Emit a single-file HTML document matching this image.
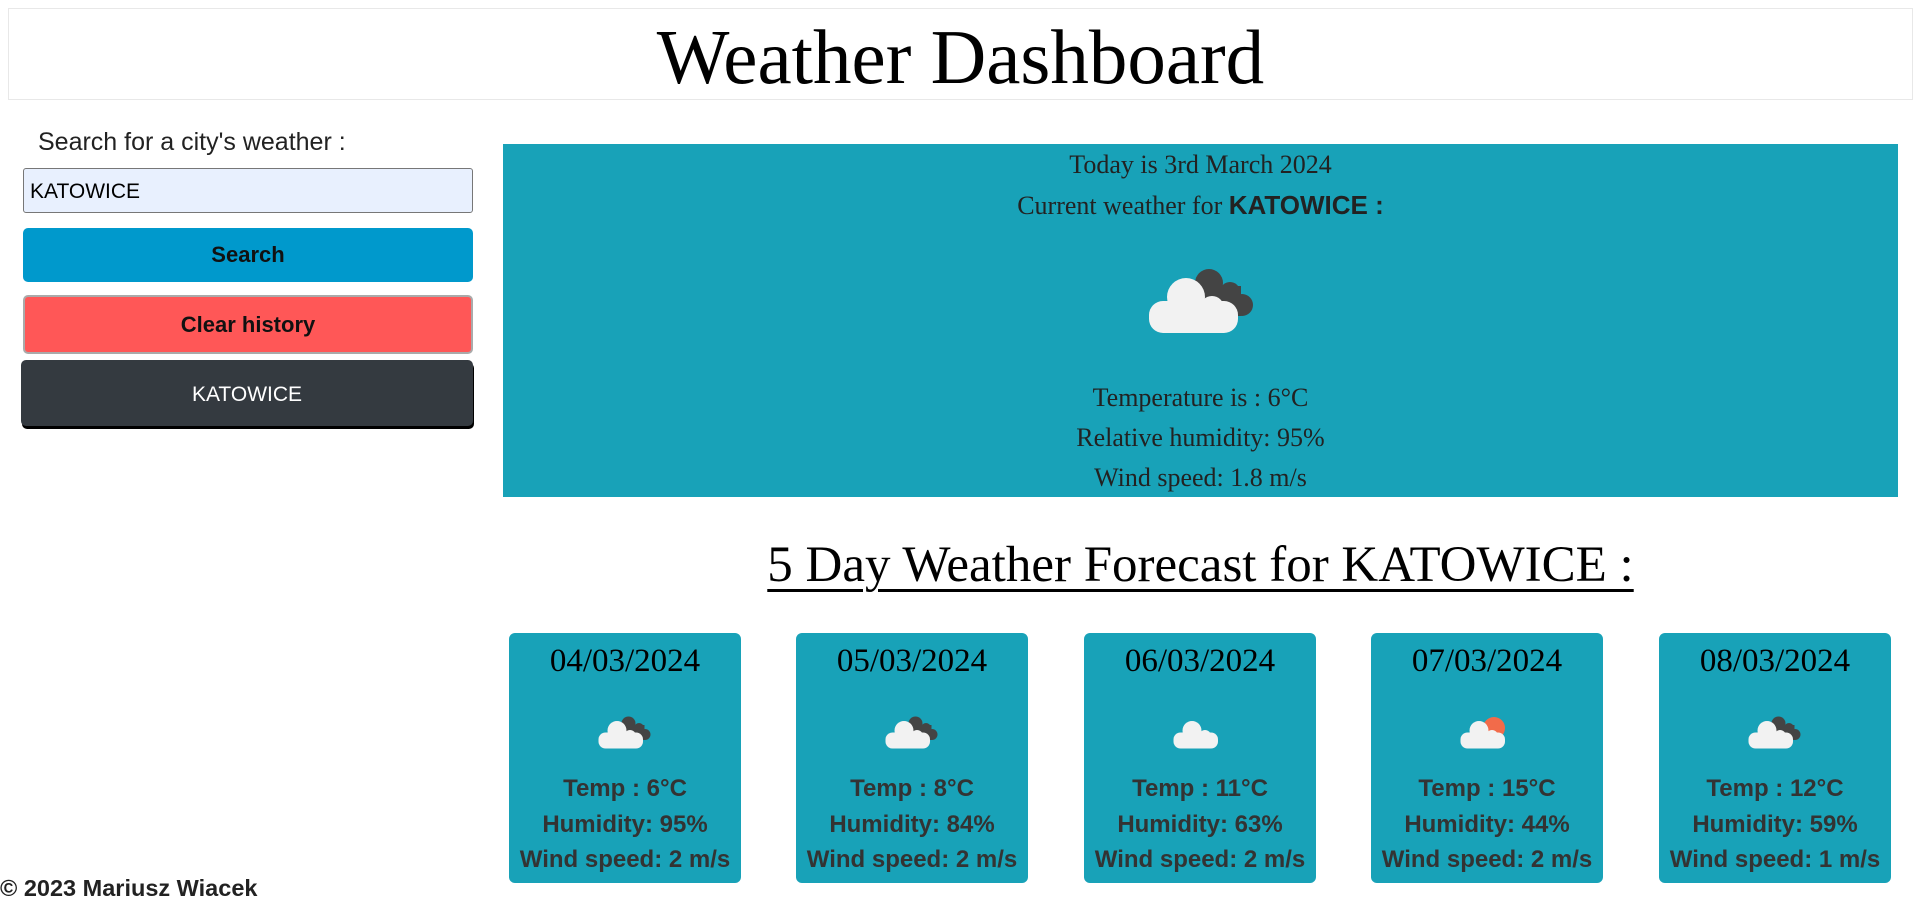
<!DOCTYPE html>
<html><head><meta charset="utf-8"><style>
*{box-sizing:border-box;margin:0;padding:0}
body{width:1920px;height:913px;background:#fff;position:relative;overflow:hidden;font-family:"Liberation Sans",sans-serif;color:#212529}
.abs{position:absolute}
.title{left:8px;top:8px;width:1905px;height:92px;border:1px solid #e8e8e8;text-align:center;font-family:"Liberation Serif",serif;font-size:77px;line-height:96px;color:#000}
.lbl{left:38px;top:128px;font-size:25px;color:#222}
.inp{left:23px;top:168px;width:450px;height:45px;background:#e8f0fe;border:1px solid #777;border-radius:3px;font-size:21px;line-height:45px;padding-left:6px;color:#000}
.btn{left:23px;width:450px;border-radius:5px;text-align:center;font-weight:bold;font-size:22px;color:#111}
.b1{top:228px;height:54px;background:#0099cc;line-height:54px}
.b2{top:295px;height:59px;background:#ff5757;border:2px solid #aaa;line-height:55px}
.b3{left:21px;width:452px;top:360px;height:66px;background:#343a40;color:#fff;font-weight:normal;line-height:70px;box-shadow:1px 3px 0 #000;font-size:21px}
.panel{left:503px;top:144px;width:1395px;height:353px;background:#18a2b8;text-align:center;font-family:"Liberation Serif",serif;color:#222;font-size:26px}
.panel p{position:absolute;left:0;right:0}
.h2{left:503px;width:1395px;top:536px;text-align:center;font-family:"Liberation Serif",serif;font-size:51px;text-decoration:underline;text-decoration-thickness:3px;text-underline-offset:8px;color:#000}
.card{top:633px;width:232px;height:250px;background:#18a2b8;border-radius:6px;text-align:center}
.card .d{position:absolute;left:0;right:0;top:10px;font-family:"Liberation Serif",serif;font-size:33px;color:#000}
.card .t{position:absolute;left:0;right:0;font-weight:bold;font-size:24px;color:#333}
.card svg{position:absolute;left:88px;top:82px}
.foot{left:0;top:875px;font-size:23.5px;font-weight:bold;color:#222}
</style></head><body>
<svg width="0" height="0" style="position:absolute">
<defs>
<g id="dark"><g fill="#444"><circle cx="63" cy="17" r="14"/><circle cx="84" cy="26" r="10"/><circle cx="96" cy="39" r="11"/><rect x="55" y="20" width="40" height="30"/></g></g>
<g id="white"><g fill="#f2f2f2"><rect x="3" y="35" width="89" height="32" rx="14"/><circle cx="40" cy="31" r="19"/><circle cx="66" cy="42" r="12"/></g></g>
</defs></svg>
<div class="abs title">Weather Dashboard</div>
<div class="abs lbl">Search for a city's weather :</div>
<div class="abs inp">KATOWICE</div>
<div class="abs btn b1">Search</div>
<div class="abs btn b2">Clear history</div>
<div class="abs btn b3">KATOWICE</div>
<div class="abs panel">
<p style="top:6px">Today is 3rd March 2024</p>
<p style="top:46px">Current weather for <b style="font-family:'Liberation Sans',sans-serif">KATOWICE :</b></p>
<svg style="position:absolute;left:643px;top:122px" width="110" height="70" viewBox="0 0 110 70"><use href="#dark"/><use href="#white"/></svg>
<p style="top:239px">Temperature is : 6°C</p>
<p style="top:279px">Relative humidity: 95%</p>
<p style="top:319px">Wind speed: 1.8 m/s</p>
</div>
<div class="abs h2">5 Day Weather Forecast for KATOWICE :</div>

<div class="abs card" style="left:509px"><div class="d">04/03/2024</div>
<svg width="55" height="35" viewBox="0 0 110 70"><use href="#dark"/><use href="#white"/></svg>
<div class="t" style="top:142px">Temp : 6°C</div><div class="t" style="top:178px">Humidity: 95%</div><div class="t" style="top:213px">Wind speed: 2 m/s</div></div>

<div class="abs card" style="left:796px"><div class="d">05/03/2024</div>
<svg width="55" height="35" viewBox="0 0 110 70"><use href="#dark"/><use href="#white"/></svg>
<div class="t" style="top:142px">Temp : 8°C</div><div class="t" style="top:178px">Humidity: 84%</div><div class="t" style="top:213px">Wind speed: 2 m/s</div></div>

<div class="abs card" style="left:1084px"><div class="d">06/03/2024</div>
<svg width="55" height="35" viewBox="0 0 110 70"><use href="#white"/></svg>
<div class="t" style="top:142px">Temp : 11°C</div><div class="t" style="top:178px">Humidity: 63%</div><div class="t" style="top:213px">Wind speed: 2 m/s</div></div>

<div class="abs card" style="left:1371px"><div class="d">07/03/2024</div>
<svg width="55" height="35" viewBox="0 0 110 70"><circle cx="70" cy="26" r="22" fill="#f26b4a"/><use href="#white"/></svg>
<div class="t" style="top:142px">Temp : 15°C</div><div class="t" style="top:178px">Humidity: 44%</div><div class="t" style="top:213px">Wind speed: 2 m/s</div></div>

<div class="abs card" style="left:1659px"><div class="d">08/03/2024</div>
<svg width="55" height="35" viewBox="0 0 110 70"><use href="#dark"/><use href="#white"/></svg>
<div class="t" style="top:142px">Temp : 12°C</div><div class="t" style="top:178px">Humidity: 59%</div><div class="t" style="top:213px">Wind speed: 1 m/s</div></div>

<div class="abs foot">© 2023 Mariusz Wiacek</div>
</body></html>
